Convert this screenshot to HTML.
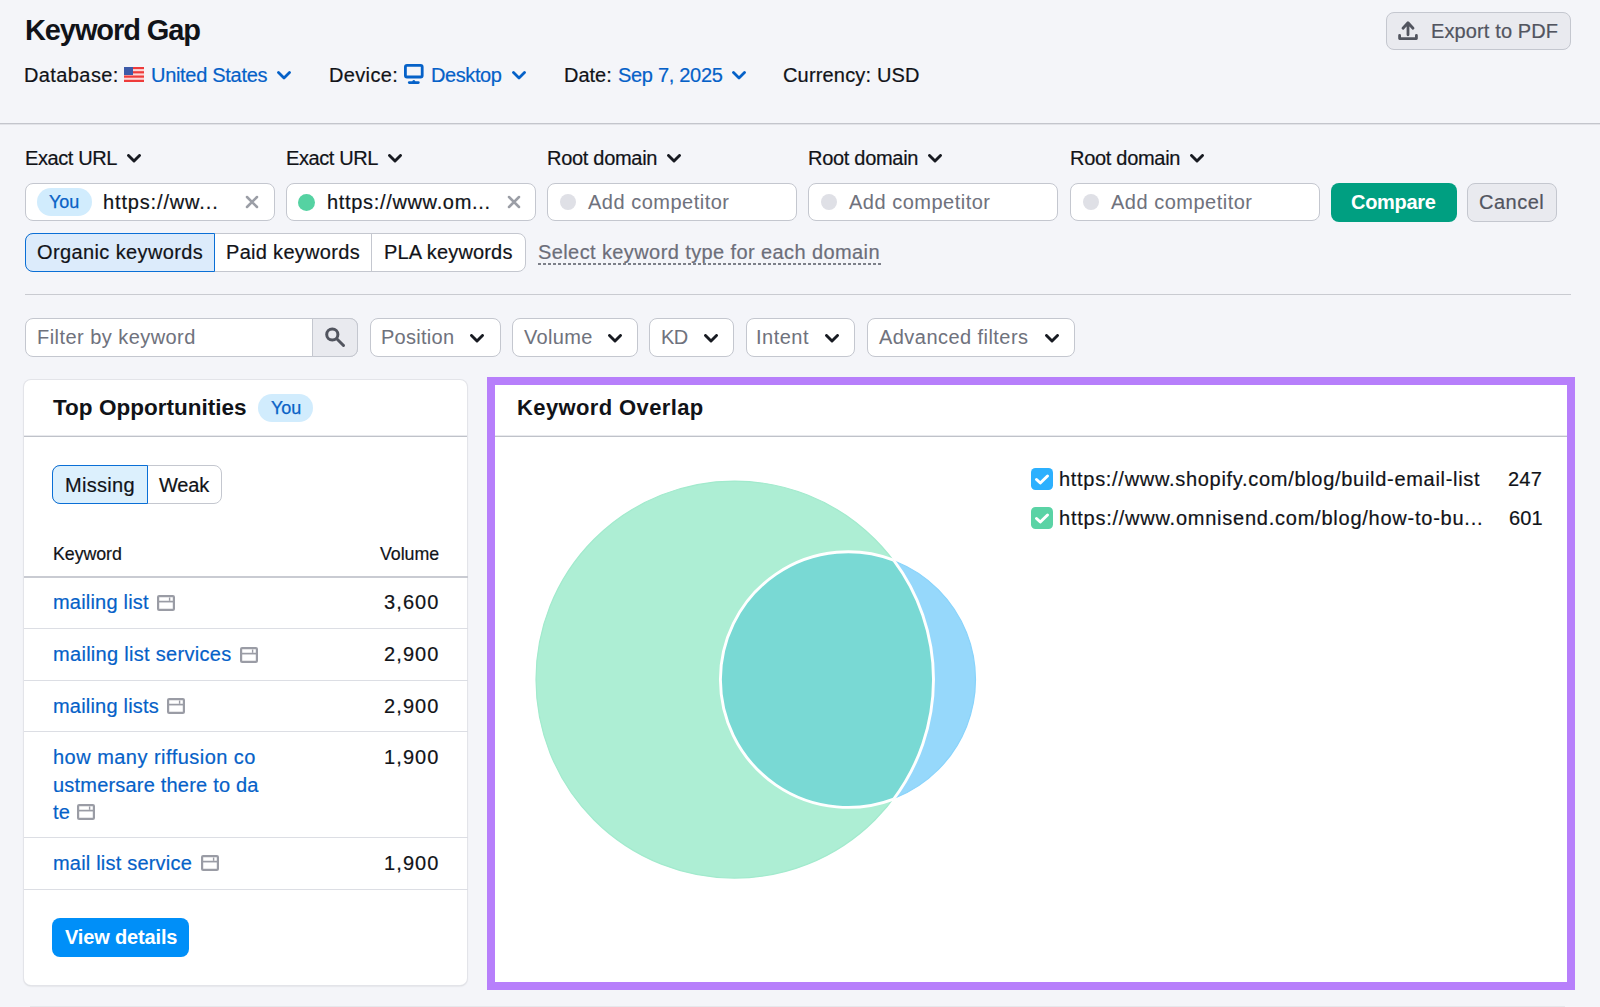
<!DOCTYPE html>
<html><head><meta charset="utf-8">
<style>
*{box-sizing:border-box;margin:0;padding:0}
html,body{width:1600px;height:1007px;overflow:hidden;background:#f4f5f9;font-family:"Liberation Sans",sans-serif;color:#111318}
.a{position:absolute;white-space:nowrap}
.t20{font-size:20px;line-height:24px;-webkit-text-stroke:0.2px currentColor}
.blue{color:#0561c8}
.chev{position:absolute;width:14px;height:9px}
.box{position:absolute;background:#fff;border:1px solid #c4c7cf;border-radius:8px}
.gray{color:#6f727d;-webkit-text-stroke:0.05px currentColor}
</style></head><body>

<!-- Header -->
<div class="a" style="left:25px;top:13px;font-size:29px;line-height:35px;font-weight:700;letter-spacing:-1.1px">Keyword Gap</div>

<div class="a t20" style="left:24px;top:63px;letter-spacing:0.4px">Database:</div>
<svg class="a" style="left:124px;top:67px" width="20" height="15" viewBox="0 0 20 15">
 <rect width="20" height="15" fill="#ee3b3b"/>
 <rect y="2.1" width="20" height="2.1" fill="#fff" opacity=".8"/>
 <rect y="6.4" width="20" height="2.1" fill="#fff" opacity=".8"/>
 <rect y="10.7" width="20" height="2.1" fill="#fff" opacity=".8"/>
 <rect width="9" height="8" fill="#3d5aa8"/>
</svg>
<div class="a t20 blue" style="left:151px;top:63px;letter-spacing:-0.3px">United States</div>
<svg class="chev" style="left:277px;top:71px" viewBox="0 0 14 9"><path d="M1.5 1.5 L7 7 L12.5 1.5" fill="none" stroke="#0561c8" stroke-width="2.8" stroke-linecap="round" stroke-linejoin="round"/></svg>

<div class="a t20" style="left:329px;top:63px;letter-spacing:0.35px">Device:</div>
<svg class="a" style="left:404px;top:64px" width="20" height="21" viewBox="0 0 20 21">
 <rect x="1.4" y="1.4" width="16.8" height="11.6" rx="1.6" fill="none" stroke="#0561c8" stroke-width="2.8"/>
 <path d="M5.2 18.6 H14.4" stroke="#0561c8" stroke-width="2.6" stroke-linecap="round"/>
 <circle cx="9.8" cy="17.6" r="1.5" fill="#0561c8"/>
</svg>
<div class="a t20 blue" style="left:431px;top:63px;letter-spacing:-0.4px">Desktop</div>
<svg class="chev" style="left:512px;top:71px" viewBox="0 0 14 9"><path d="M1.5 1.5 L7 7 L12.5 1.5" fill="none" stroke="#0561c8" stroke-width="2.8" stroke-linecap="round" stroke-linejoin="round"/></svg>

<div class="a t20" style="left:564px;top:63px">Date:</div>
<div class="a t20 blue" style="left:618px;top:63px;letter-spacing:-0.3px">Sep 7, 2025</div>
<svg class="chev" style="left:732px;top:71px" viewBox="0 0 14 9"><path d="M1.5 1.5 L7 7 L12.5 1.5" fill="none" stroke="#0561c8" stroke-width="2.8" stroke-linecap="round" stroke-linejoin="round"/></svg>

<div class="a t20" style="left:783px;top:63px;letter-spacing:0.17px">Currency: USD</div>

<!-- Export button -->
<div class="a" style="left:1386px;top:12px;width:185px;height:38px;background:#e9eaef;border:1px solid #c4c7cf;border-radius:8px"></div>
<svg class="a" style="left:1396px;top:18px" width="24" height="26" viewBox="0 0 24 26" fill="none" stroke="#52555f" stroke-width="2.8" stroke-linecap="round" stroke-linejoin="round">
 <path d="M7 10.3 L12 4.7 L17 10.3 M12 5.2 V16.8"/>
 <path d="M3.6 17.4 V20.6 H20.4 V17.4"/>
</svg>
<div class="a t20" style="left:1431px;top:19px;color:#52555f;letter-spacing:0.12px">Export to PDF</div>

<!-- Header separator -->
<div class="a" style="left:0;top:123px;width:1600px;height:1px;background:#c3c5cc"></div>
<div class="a" style="left:0;top:124px;width:1600px;height:1px;background:#e2e3e8"></div>


<!-- Competitor row labels -->
<div class="a t20" style="left:25px;top:146px;letter-spacing:-0.4px">Exact URL</div>
<svg class="chev" style="left:127px;top:154px" viewBox="0 0 14 9"><path d="M1.5 1.5 L7 7 L12.5 1.5" fill="none" stroke="#181b22" stroke-width="2.9" stroke-linecap="round" stroke-linejoin="round"/></svg>
<div class="a t20" style="left:286px;top:146px;letter-spacing:-0.4px">Exact URL</div>
<svg class="chev" style="left:388px;top:154px" viewBox="0 0 14 9"><path d="M1.5 1.5 L7 7 L12.5 1.5" fill="none" stroke="#181b22" stroke-width="2.9" stroke-linecap="round" stroke-linejoin="round"/></svg>
<div class="a t20" style="left:547px;top:146px;letter-spacing:-0.3px">Root domain</div>
<svg class="chev" style="left:667px;top:154px" viewBox="0 0 14 9"><path d="M1.5 1.5 L7 7 L12.5 1.5" fill="none" stroke="#181b22" stroke-width="2.9" stroke-linecap="round" stroke-linejoin="round"/></svg>
<div class="a t20" style="left:808px;top:146px;letter-spacing:-0.3px">Root domain</div>
<svg class="chev" style="left:928px;top:154px" viewBox="0 0 14 9"><path d="M1.5 1.5 L7 7 L12.5 1.5" fill="none" stroke="#181b22" stroke-width="2.9" stroke-linecap="round" stroke-linejoin="round"/></svg>
<div class="a t20" style="left:1070px;top:146px;letter-spacing:-0.3px">Root domain</div>
<svg class="chev" style="left:1190px;top:154px" viewBox="0 0 14 9"><path d="M1.5 1.5 L7 7 L12.5 1.5" fill="none" stroke="#181b22" stroke-width="2.9" stroke-linecap="round" stroke-linejoin="round"/></svg>

<!-- Inputs -->
<div class="box" style="left:25px;top:183px;width:250px;height:38px"></div>
<div class="a" style="left:37px;top:188px;width:55px;height:28px;border-radius:14px;background:#d1ecfd"></div>
<div class="a" style="left:49px;top:191px;font-size:18px;line-height:22px;-webkit-text-stroke:0.25px currentColor;color:#0a62c6">You</div>
<div class="a t20" style="left:103px;top:190px;letter-spacing:0.85px">https://ww...</div>
<svg class="a" style="left:245px;top:195px" width="14" height="14" viewBox="0 0 14 14"><path d="M2 2 L12 12 M12 2 L2 12" stroke="#9b9ea6" stroke-width="2.5" stroke-linecap="round"/></svg>

<div class="box" style="left:286px;top:183px;width:250px;height:38px"></div>
<div class="a" style="left:298px;top:194px;width:17px;height:17px;border-radius:50%;background:#55d2a2"></div>
<div class="a t20" style="left:327px;top:190px;letter-spacing:0.67px">https://www.om...</div>
<svg class="a" style="left:507px;top:195px" width="14" height="14" viewBox="0 0 14 14"><path d="M2 2 L12 12 M12 2 L2 12" stroke="#9b9ea6" stroke-width="2.5" stroke-linecap="round"/></svg>

<div class="box" style="left:547px;top:183px;width:250px;height:38px"></div>
<div class="a" style="left:560px;top:194px;width:16px;height:16px;border-radius:50%;background:#dfe0e6"></div>
<div class="a t20 gray" style="left:588px;top:190px;letter-spacing:0.5px">Add competitor</div>
<div class="box" style="left:808px;top:183px;width:250px;height:38px"></div>
<div class="a" style="left:821px;top:194px;width:16px;height:16px;border-radius:50%;background:#dfe0e6"></div>
<div class="a t20 gray" style="left:849px;top:190px;letter-spacing:0.5px">Add competitor</div>
<div class="box" style="left:1070px;top:183px;width:250px;height:38px"></div>
<div class="a" style="left:1083px;top:194px;width:16px;height:16px;border-radius:50%;background:#dfe0e6"></div>
<div class="a t20 gray" style="left:1111px;top:190px;letter-spacing:0.5px">Add competitor</div>

<div class="a" style="left:1331px;top:183px;width:126px;height:38.5px;border-radius:8px;background:#009f81"></div>
<div class="a t20" style="left:1351px;top:190px;color:#fff;font-weight:700;letter-spacing:-0.3px;-webkit-text-stroke:0">Compare</div>
<div class="a" style="left:1467px;top:183px;width:90px;height:38.5px;border-radius:8px;background:#e9eaef;border:1px solid #c4c7cf"></div>
<div class="a t20" style="left:1479px;top:190px;color:#52555f;letter-spacing:0.5px">Cancel</div>

<!-- Keyword type tabs -->
<div class="a" style="left:25px;top:233px;width:501px;height:39px;border:1px solid #c4c7cf;border-radius:8px;background:#fff"></div>
<div class="a" style="left:25px;top:233px;width:190px;height:39px;border:1px solid #0a6fd6;border-radius:8px 0 0 8px;background:#dcebfb"></div>
<div class="a" style="left:371px;top:234px;width:1px;height:37px;background:#c4c7cf"></div>
<div class="a t20" style="left:37px;top:240px;letter-spacing:0.38px">Organic keywords</div>
<div class="a t20" style="left:226px;top:240px;letter-spacing:0.3px">Paid keywords</div>
<div class="a t20" style="left:384px;top:240px;letter-spacing:0.15px">PLA keywords</div>
<div class="a t20" style="left:538px;top:240px;color:#6c6e79;letter-spacing:0.4px">Select keyword type for each domain</div>
<div class="a" style="left:538px;top:263px;width:343px;height:2px;background:repeating-linear-gradient(90deg,#7d8089 0 3px,transparent 3px 5px)"></div>

<!-- separator -->
<div class="a" style="left:25px;top:294px;width:1546px;height:1px;background:#c9cbd1"></div>

<!-- Filters -->
<div class="box" style="left:25px;top:318px;width:333px;height:39px"></div>
<div class="a" style="left:312px;top:318px;width:46px;height:39px;background:#e9eaef;border:1px solid #c4c7cf;border-radius:0 8px 8px 0"></div>
<svg class="a" style="left:324px;top:326px" width="22" height="22" viewBox="0 0 22 22"><circle cx="8.3" cy="8.5" r="5.6" fill="none" stroke="#52555f" stroke-width="3"/><path d="M13 13 L19.5 19.5" stroke="#52555f" stroke-width="3" stroke-linecap="round"/></svg>
<div class="a t20 gray" style="left:37px;top:325px;letter-spacing:0.45px">Filter by keyword</div>

<div class="box" style="left:370px;top:318px;width:131px;height:39px"></div>
<div class="a t20 gray" style="left:381px;top:325px;letter-spacing:0.28px">Position</div>
<svg class="chev" style="left:470px;top:334px" viewBox="0 0 14 9"><path d="M1.5 1.5 L7 7 L12.5 1.5" fill="none" stroke="#181b22" stroke-width="2.9" stroke-linecap="round" stroke-linejoin="round"/></svg>
<div class="box" style="left:512px;top:318px;width:126px;height:39px"></div>
<div class="a t20 gray" style="left:524px;top:325px;letter-spacing:0.32px">Volume</div>
<svg class="chev" style="left:608px;top:334px" viewBox="0 0 14 9"><path d="M1.5 1.5 L7 7 L12.5 1.5" fill="none" stroke="#181b22" stroke-width="2.9" stroke-linecap="round" stroke-linejoin="round"/></svg>
<div class="box" style="left:649px;top:318px;width:85px;height:39px"></div>
<div class="a t20 gray" style="left:661px;top:325px;letter-spacing:-0.5px">KD</div>
<svg class="chev" style="left:704px;top:334px" viewBox="0 0 14 9"><path d="M1.5 1.5 L7 7 L12.5 1.5" fill="none" stroke="#181b22" stroke-width="2.9" stroke-linecap="round" stroke-linejoin="round"/></svg>
<div class="box" style="left:746px;top:318px;width:109px;height:39px"></div>
<div class="a t20 gray" style="left:756px;top:325px;letter-spacing:0.5px">Intent</div>
<svg class="chev" style="left:825px;top:334px" viewBox="0 0 14 9"><path d="M1.5 1.5 L7 7 L12.5 1.5" fill="none" stroke="#181b22" stroke-width="2.9" stroke-linecap="round" stroke-linejoin="round"/></svg>
<div class="box" style="left:867px;top:318px;width:208px;height:39px"></div>
<div class="a t20 gray" style="left:879px;top:325px;letter-spacing:0.45px">Advanced filters</div>
<svg class="chev" style="left:1045px;top:334px" viewBox="0 0 14 9"><path d="M1.5 1.5 L7 7 L12.5 1.5" fill="none" stroke="#181b22" stroke-width="2.9" stroke-linecap="round" stroke-linejoin="round"/></svg>


<!-- Left card -->
<div class="a" style="left:24px;top:380px;width:443px;height:605px;background:#fff;border-radius:7px;box-shadow:0 0 0 1px #e3e4e9,0 1px 2px rgba(0,0,0,.18)"></div>
<div class="a" style="left:53px;top:394px;font-size:22.5px;line-height:28px;font-weight:700;letter-spacing:0.02px">Top Opportunities</div>
<div class="a" style="left:258px;top:394px;width:55px;height:28px;border-radius:14px;background:#d1ecfd"></div>
<div class="a" style="left:271px;top:397px;color:#0a62c6;font-size:18px;line-height:22px;-webkit-text-stroke:0.25px currentColor">You</div>
<div class="a" style="left:24px;top:436px;width:443px;height:1px;background:#bfc2c9"></div><div class="a" style="left:24px;top:435px;width:443px;height:1px;background:#e8e9ed"></div>

<div class="a" style="left:52px;top:465px;width:170px;height:39px;border:1px solid #c4c7cf;border-radius:8px;background:#fff"></div>
<div class="a" style="left:52px;top:465px;width:96px;height:39px;border:1px solid #0a6fd6;border-radius:8px 0 0 8px;background:#dcf0fd"></div>
<div class="a t20" style="left:65px;top:473px;letter-spacing:0.3px">Missing</div>
<div class="a t20" style="left:159px;top:473px;letter-spacing:-0.2px">Weak</div>

<div class="a" style="left:53px;top:544px;font-size:17.8px;line-height:20px;-webkit-text-stroke:0.2px currentColor;letter-spacing:-0.05px">Keyword</div>
<div class="a" style="left:380px;top:544px;font-size:17.8px;line-height:20px;-webkit-text-stroke:0.2px currentColor;letter-spacing:-0.05px">Volume</div>
<div class="a" style="left:24px;top:576px;width:444px;height:2px;background:#c9cbd2"></div>

<div class="a t20 blue" style="left:53px;top:590px;letter-spacing:0.2px">mailing list</div>
<svg class="a" style="left:157px;top:595px" width="18" height="16" viewBox="0 0 18 16"><rect x="1.1" y="1.1" width="15.8" height="13.8" rx="1" fill="none" stroke="#9a9ca5" stroke-width="2.2"/><path d="M1.5 6.6 H16.5" stroke="#9a9ca5" stroke-width="1.7"/><path d="M12.6 2.5 V5.8" stroke="#9a9ca5" stroke-width="1.4"/></svg>
<div class="a t20" style="left:384px;top:590px;letter-spacing:1.1px">3,600</div>
<div class="a" style="left:24px;top:628px;width:444px;height:1px;background:#dcdee4"></div>

<div class="a t20 blue" style="left:53px;top:642px;letter-spacing:0.3px">mailing list services</div>
<svg class="a" style="left:240px;top:647px" width="18" height="16" viewBox="0 0 18 16"><rect x="1.1" y="1.1" width="15.8" height="13.8" rx="1" fill="none" stroke="#9a9ca5" stroke-width="2.2"/><path d="M1.5 6.6 H16.5" stroke="#9a9ca5" stroke-width="1.7"/><path d="M12.6 2.5 V5.8" stroke="#9a9ca5" stroke-width="1.4"/></svg>
<div class="a t20" style="left:384px;top:642px;letter-spacing:1.1px">2,900</div>
<div class="a" style="left:24px;top:680px;width:444px;height:1px;background:#dcdee4"></div>

<div class="a t20 blue" style="left:53px;top:694px;letter-spacing:0.2px">mailing lists</div>
<svg class="a" style="left:167px;top:698px" width="18" height="16" viewBox="0 0 18 16"><rect x="1.1" y="1.1" width="15.8" height="13.8" rx="1" fill="none" stroke="#9a9ca5" stroke-width="2.2"/><path d="M1.5 6.6 H16.5" stroke="#9a9ca5" stroke-width="1.7"/><path d="M12.6 2.5 V5.8" stroke="#9a9ca5" stroke-width="1.4"/></svg>
<div class="a t20" style="left:384px;top:694px;letter-spacing:1.1px">2,900</div>
<div class="a" style="left:24px;top:731px;width:444px;height:1px;background:#dcdee4"></div>

<div class="a t20 blue" style="left:53px;top:745px;letter-spacing:0.47px">how many riffusion co</div><div class="a t20 blue" style="left:53px;top:772.6px;letter-spacing:0.2px">ustmersare there to da</div><div class="a t20 blue" style="left:53px;top:800.2px;letter-spacing:0.2px">te</div>
<svg class="a" style="left:77px;top:804px" width="18" height="16" viewBox="0 0 18 16"><rect x="1.1" y="1.1" width="15.8" height="13.8" rx="1" fill="none" stroke="#9a9ca5" stroke-width="2.2"/><path d="M1.5 6.6 H16.5" stroke="#9a9ca5" stroke-width="1.7"/><path d="M12.6 2.5 V5.8" stroke="#9a9ca5" stroke-width="1.4"/></svg>
<div class="a t20" style="left:384px;top:745px;letter-spacing:1.1px">1,900</div>
<div class="a" style="left:24px;top:837px;width:444px;height:1px;background:#dcdee4"></div>

<div class="a t20 blue" style="left:53px;top:851px;letter-spacing:0.2px">mail list service</div>
<svg class="a" style="left:201px;top:855px" width="18" height="16" viewBox="0 0 18 16"><rect x="1.1" y="1.1" width="15.8" height="13.8" rx="1" fill="none" stroke="#9a9ca5" stroke-width="2.2"/><path d="M1.5 6.6 H16.5" stroke="#9a9ca5" stroke-width="1.7"/><path d="M12.6 2.5 V5.8" stroke="#9a9ca5" stroke-width="1.4"/></svg>
<div class="a t20" style="left:384px;top:851px;letter-spacing:1.1px">1,900</div>
<div class="a" style="left:24px;top:889px;width:444px;height:1px;background:#dcdee4"></div>

<div class="a" style="left:52px;top:918px;width:137px;height:39px;border-radius:8px;background:#008ff8"></div>
<div class="a t20" style="left:65px;top:925px;color:#fff;font-weight:700;letter-spacing:-0.15px;-webkit-text-stroke:0">View details</div>


<!-- Keyword Overlap panel -->
<div class="a" style="left:487px;top:377px;width:1088px;height:613px;border:8px solid #b77ffb;background:#fff"></div>
<div class="a" style="left:517px;top:394px;font-size:22px;line-height:28px;font-weight:700;letter-spacing:0.38px">Keyword Overlap</div>
<div class="a" style="left:495px;top:436px;width:1072px;height:1px;background:#bfc2c9"></div><div class="a" style="left:495px;top:435px;width:1072px;height:1px;background:#e8e9ed"></div>

<svg class="a" style="left:495px;top:437px" width="1072" height="545" viewBox="495 437 1072 545">
 <defs>
  <clipPath id="cbig"><circle cx="734.5" cy="679.6" r="199"/></clipPath>
 </defs>
 <circle cx="734.5" cy="679.6" r="198.5" fill="#adeed4" stroke="#a2eacd" stroke-width="1.2"/>
 <circle cx="848.2" cy="679.6" r="127.3" fill="#96d8fb" stroke="#89d3fb" stroke-width="1.2"/>
 <g clip-path="url(#cbig)">
  <circle cx="848.2" cy="679.6" r="127.8" fill="#79d9d4"/>
 </g>
 <g fill="none" stroke="#fff" stroke-width="2.9">
  <path d="M 893.67 560.16 A 127.8 127.8 0 1 0 893.67 799.04"/>
  <path d="M 893.67 560.16 A 199 199 0 0 1 893.67 799.04"/>
 </g>
</svg>

<svg class="a" style="left:1031px;top:468px" width="22" height="22" viewBox="0 0 22 22"><rect width="22" height="22" rx="4.5" fill="#2cb0fe"/><path d="M5.5 11.5 L9.3 15 L16.5 8" fill="none" stroke="#fff" stroke-width="3" stroke-linecap="round" stroke-linejoin="round"/></svg>
<div class="a t20" style="left:1059px;top:467px;letter-spacing:0.7px">https://www.shopify.com/blog/build-email-list</div>
<div class="a t20" style="left:1508px;top:467px;letter-spacing:0.2px">247</div>
<svg class="a" style="left:1031px;top:507px" width="22" height="22" viewBox="0 0 22 22"><rect width="22" height="22" rx="4.5" fill="#5ad3a5"/><path d="M5.5 11.5 L9.3 15 L16.5 8" fill="none" stroke="#fff" stroke-width="3" stroke-linecap="round" stroke-linejoin="round"/></svg>
<div class="a t20" style="left:1059px;top:506px;letter-spacing:0.76px">https://www.omnisend.com/blog/how-to-bu...</div>
<div class="a t20" style="left:1509px;top:506px;letter-spacing:0.1px">601</div>

<!-- bottom faint line -->
<div class="a" style="left:30px;top:1006px;width:1535px;height:1px;background:#e6e7eb"></div>

</body></html>
